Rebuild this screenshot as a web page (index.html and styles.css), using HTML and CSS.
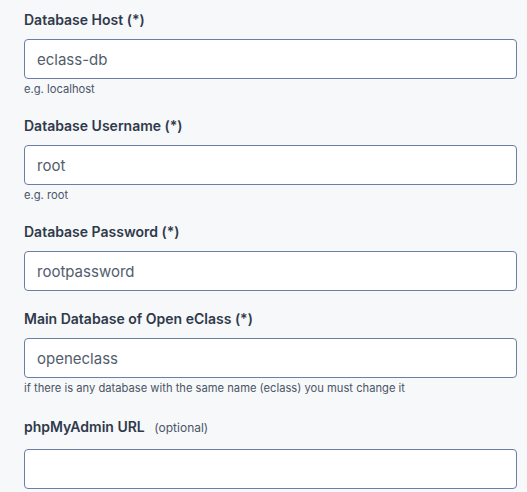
FILE: index.html
```html
<!DOCTYPE html>
<html lang="en">
<head>
  <meta charset="UTF-8" />
  <meta name="viewport" content="width=device-width, initial-scale=1.0"/>
  <title>Open eClass - Database settings</title>
  <link rel="stylesheet" href="styles.css">
</head>
<body>
  <form class="db-form">
    <div class="form-group">
      <label class="form-label" for="dbHost">Database Host (*)</label>
      <input class="form-input" id="dbHost" type="text" value="eclass-db">
      <div class="form-help">e.g. localhost</div>
    </div>

    <div class="form-group">
      <label class="form-label" for="dbUser">Database Username (*)</label>
      <input class="form-input" id="dbUser" type="text" value="root">
      <div class="form-help">e.g. root</div>
    </div>

    <div class="form-group">
      <label class="form-label" for="dbPass">Database Password (*)</label>
      <input class="form-input" id="dbPass" type="text" value="rootpassword">
    </div>

    <div class="form-group">
      <label class="form-label" for="dbName">Main Database of Open eClass (*)</label>
      <input class="form-input" id="dbName" type="text" value="openeclass">
      <div class="form-help">if there is any database with the same name (eclass) you must change it</div>
    </div>

    <div class="form-group">
      <label class="form-label form-label-tall" for="pmaUrl">phpMyAdmin URL <span class="optional">(optional)</span></label>
      <input class="form-input" id="pmaUrl" type="text" value="">
    </div>
  </form>
</body>
</html>
```

FILE: styles.css
```css
body {
  margin: 0;
  padding: 0;
  font-family: 'Inter', 'Noto Sans', sans-serif;
  background: #f7f8fa;
  color: #2f3a4a;
}

.db-form {
  padding: 9px 10px 0 24px;
}

.form-group {
  margin-bottom: 17px;
}

.form-label {
  display: block;
  font-size: 14px;
  font-weight: 600;
  line-height: 21px;
  margin-bottom: 9px;
  color: #2f3a4a;
}

/* label with the (optional) hint sits a bit lower */
.form-label-tall {
  line-height: 25px;
  margin-top: 0;
}

.optional {
  font-size: 12px;
  font-weight: 400;
  color: #4a5566;
  margin-left: 6px;
}

.form-input {
  display: block;
  box-sizing: border-box;
  width: 100%;
  height: 40px;
  padding: 0 12px;
  border: 1px solid #6a7fa6;
  border-radius: 4px;
  background: #fff;
  font-family: inherit;
  font-size: 15px;
  color: #525d6d;
  outline: none;
}

.form-help {
  margin-top: 2px;
  font-size: 11.2px;
  line-height: 17px;
  color: #4a5566;
}
```
